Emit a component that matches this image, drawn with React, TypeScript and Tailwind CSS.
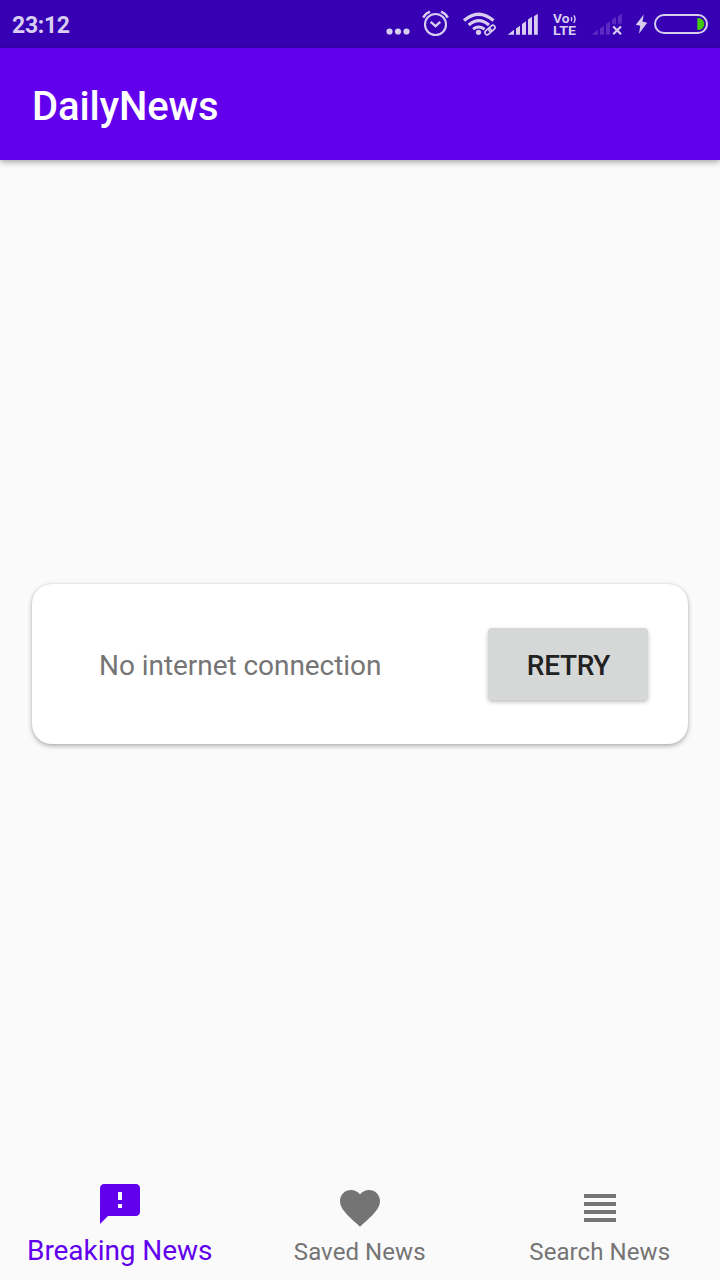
import type { ReactNode } from "react";

function StatusIcons() {
  return (
    <div className="flex h-12 text-[#d8cdf0]">
      {/* Overflow dots */}
      <svg width="36" height="48" viewBox="380 0 36 48" fill="currentColor">
        <circle cx="389.5" cy="31.5" r="3.1" />
        <circle cx="398" cy="31.5" r="3.1" />
        <circle cx="406.5" cy="31.5" r="3.1" />
      </svg>
      {/* Alarm */}
      <svg width="42" height="48" viewBox="416 0 42 48" fill="none" stroke="currentColor">
        <circle cx="435.5" cy="24.5" r="10.5" strokeWidth="2.1" />
        <path d="M430.7 21.8l4.8 4.4 4.8-4.4" strokeWidth="2.3" />
        <path d="M423.2 17.6q2.2-4.2 6.8-6M447.8 17.6q-2.2-4.2-6.8-6" strokeWidth="2.4" />
      </svg>
      {/* Wi-Fi with link */}
      <svg width="44" height="48" viewBox="458 0 44 48" fill="none" stroke="currentColor">
        <path d="M464 20.6q14.5-12.8 29.5 0" strokeWidth="3.3" />
        <path d="M468.7 25q10-8.6 20.3 0" strokeWidth="3.1" />
        <path d="M473 29.2q5.6-4.2 11.6 0" strokeWidth="2.9" />
        <circle cx="478.5" cy="32.3" r="2.6" fill="currentColor" stroke="none" />
        <g transform="rotate(-42 490 30)" strokeWidth="1.6">
          <rect x="484" y="27.8" width="7" height="4.4" rx="2.2" />
          <rect x="489" y="27.8" width="7" height="4.4" rx="2.2" />
        </g>
      </svg>
      {/* Signal */}
      <svg width="48" height="48" viewBox="502 0 48 48" fill="currentColor">
        <path d="M507.6 34.8l6.4-5v5zM516 28.4l4-2.7v9.1h-4zM522 24l4-2.8v13.6h-4zM528 19.6l4-2.8v18h-4zM534 16.2l3.8-2.4v21H534z" />
      </svg>
      {/* VoLTE */}
      <div className="relative flex w-9 flex-col pt-[13px] pl-[3px] font-bold">
        <span className="block h-[11px] w-fit origin-left scale-x-110 text-[12.5px] leading-[11px]">Vo</span>
        <span className="mt-px block h-[11px] w-fit origin-left scale-x-[1.14] text-[12.5px] leading-[11px]">LTE</span>
        <svg className="absolute top-0 left-0" width="36" height="48" viewBox="550 0 36 48" fill="none" stroke="currentColor">
          <path d="M571.2 17.2q1.2 2 0 4M573.8 15.3q2.6 3.7 0 7.5" strokeWidth="1.4" />
        </svg>
      </div>
      {/* Empty SIM */}
      <svg width="44" height="48" viewBox="586 0 44 48">
        <path className="fill-[#5b2ac2]" d="M591.6 34.8l6.4-5v5zM600 28.4l4-2.7v9.1h-4zM606 24l4-2.8v13.6h-4zM612 19.6l4-2.8v8l-4-1zM618 16.2l3.8-2.4v10H618z" />
        <path d="M613.2 26.5l7.8 7.8M621 26.5l-7.8 7.8" fill="none" stroke="currentColor" strokeWidth="2.2" />
      </svg>
      {/* Charging battery */}
      <svg width="90" height="48" viewBox="630 0 90 48">
        <path fill="currentColor" d="M643.8 14.5l-8 10.3 4.4 1-1.2 7.9 8.2-11-4.8-1.2z" />
        <rect x="655" y="15" width="52" height="18" rx="9" fill="none" stroke="currentColor" strokeWidth="2" />
        <path className="fill-[#45c70b]" d="M697.3 18h1a6 6 0 0 1 0 12h-1z" />
      </svg>
    </div>
  );
}

type NavItemProps = { label: string; path: string; active?: boolean };

function Icon({ children }: { children: ReactNode }) {
  return (
    <svg className="size-12 shrink-0" viewBox="0 0 24 24" fill="currentColor">
      {children}
    </svg>
  );
}

function NavItem({ label, path, active = false }: NavItemProps) {
  return (
    <button
      className={
        active
          ? "flex flex-col items-center pt-3 text-[28px] leading-[33px] tracking-[-0.06px] text-[#6200ee]"
          : "flex flex-col items-center pt-4 text-2xl leading-7 tracking-[0.08px] text-[#747474]"
      }
    >
      <Icon>
        <path d={path} />
      </Icon>
      <span className="mt-1.5 pr-[0.5px] whitespace-nowrap">{label}</span>
    </button>
  );
}

export default function App() {
  return (
    <div className="flex h-[1280px] w-[720px] flex-col overflow-hidden bg-[#fafafa] font-[Roboto,sans-serif]">
      <div className="flex h-12 shrink-0 items-center justify-between bg-[#3700b3] pl-3">
        <span className="pt-1 text-[23px] leading-7 font-bold tracking-[-0.3px] text-[#d8cdf0]">23:12</span>
        <StatusIcons />
      </div>
      <header className="z-10 flex h-28 shrink-0 items-center bg-[#6200ee] px-8 pt-1 shadow-[0_2px_6px_rgba(0,0,0,0.35)]">
        <h1 className="text-[40px] leading-[47px] font-medium tracking-[-0.15px] text-white">DailyNews</h1>
      </header>
      <main className="flex grow flex-col px-8 pt-[424px]">
        <section className="flex h-40 items-center justify-between rounded-[20px] bg-white pr-10 pl-[67px] shadow-[0_2px_5px_rgba(0,0,0,0.3),0_0_2px_rgba(0,0,0,0.1)]">
          <p className="pt-1 text-[28px] leading-8 tracking-[-0.05px] text-[#757575]">No internet connection</p>
          <button className="h-[72px] w-40 rounded-[4px] bg-[#d6d7d7] pt-1 pl-px text-[28px] leading-8 font-medium tracking-[-0.3px] text-[#212121] shadow-[0_2px_4px_rgba(0,0,0,0.26)]">
            RETRY
          </button>
        </section>
      </main>
      <nav className="grid h-28 shrink-0 grid-cols-3">
        <NavItem
          active
          label="Breaking News"
          path="M20 2H4c-1.1 0-1.99.9-1.99 2L2 22l4-4h14c1.1 0 2-.9 2-2V4c0-1.1-.9-2-2-2zm-7 12h-2v-2h2v2zm0-4h-2V6h2v4z"
        />
        <NavItem
          label="Saved News"
          path="M12 21.35l-1.45-1.32C5.4 15.36 2 12.28 2 8.5 2 5.42 4.42 3 7.5 3c1.74 0 3.41.81 4.5 2.09C13.09 3.81 14.76 3 16.5 3 19.58 3 22 5.42 22 8.5c0 3.78-3.4 6.86-8.55 11.54L12 21.35z"
        />
        <NavItem
          label="Search News"
          path="M4 15h16v-2H4v2zm0 4h16v-2H4v2zm0-8h16V9H4v2zm0-6v2h16V5H4z"
        />
      </nav>
    </div>
  );
}
